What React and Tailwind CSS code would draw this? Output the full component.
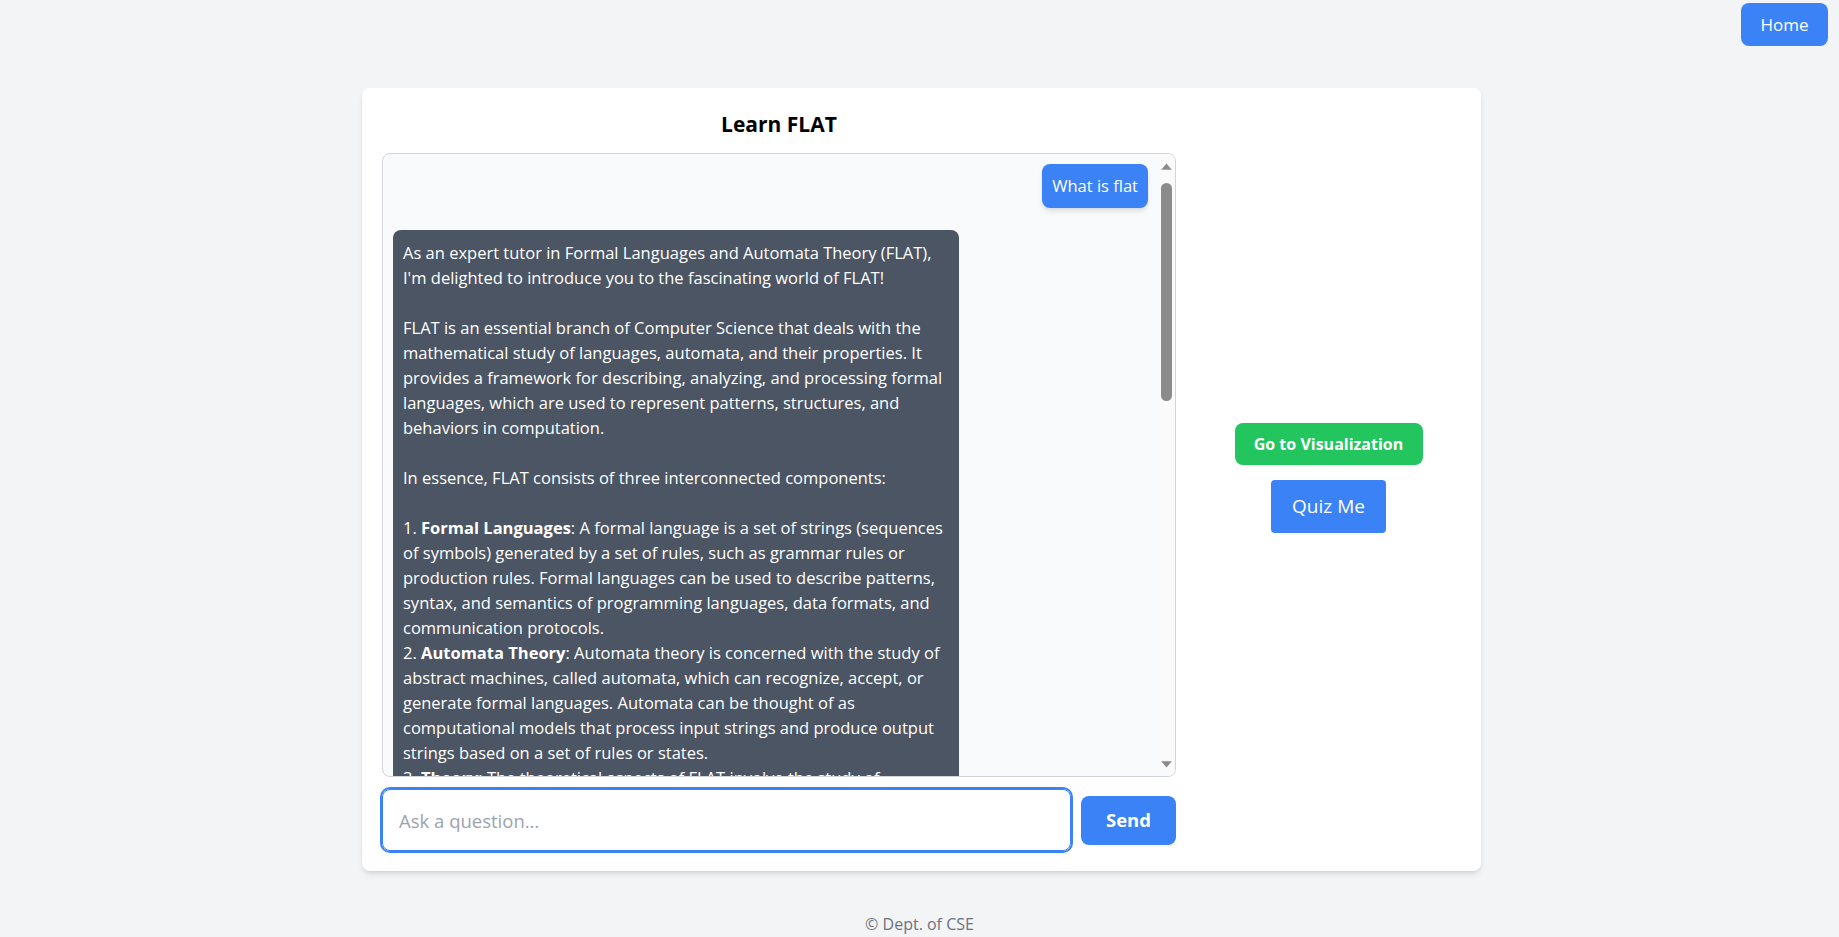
import { useState } from "react";

const answer = [
  "As an expert tutor in Formal Languages and Automata Theory (FLAT), I'm delighted to introduce you to the fascinating world of FLAT!\n\nFLAT is an essential branch of Computer Science that deals with the mathematical study of languages, automata, and their properties. It provides a framework for describing, analyzing, and processing formal languages, which are used to represent patterns, structures, and behaviors in computation.\n\nIn essence, FLAT consists of three interconnected components:\n\n1. ",
  { b: "Formal Languages" },
  ": A formal language is a set of strings (sequences of symbols) generated by a set of rules, such as grammar rules or production rules. Formal languages can be used to describe patterns, syntax, and semantics of programming languages, data formats, and communication protocols.\n2. ",
  { b: "Automata Theory" },
  ": Automata theory is concerned with the study of abstract machines, called automata, which can recognize, accept, or generate formal languages. Automata can be thought of as computational models that process input strings and produce output strings based on a set of rules or states.\n3. ",
  { b: "Theory" },
  ": The theoretical aspects of FLAT involve the study of computability, decidability, and complexity of formal languages and automata. Theory helps us understand what problems can be solved by machines and how efficiently they can be solved.\n\nSome of the key topics you'll encounter in FLAT include:\n\n* ",
  { b: "Regular languages and finite automata" },
  ": the simplest class of languages, recognized by deterministic and nondeterministic finite automata and described by regular expressions.\n* ",
  { b: "Context-free languages and pushdown automata" },
  ": languages generated by context-free grammars, which are the foundation of parsing in compilers.\n* ",
  { b: "Turing machines" },
  ": the most powerful model of computation, used to define what it means for a problem to be computable.\n* ",
  { b: "Decidability and undecidability" },
  ": the study of problems that can or cannot be solved by any algorithm, such as the halting problem.\n* ",
  { b: "Computational complexity" },
  ": the classification of problems by the resources (time and space) needed to solve them, including the famous P vs NP question.\n\nFLAT has numerous applications in computer science, including compiler design, natural language processing, text searching and pattern matching, network protocol verification, artificial intelligence, and software testing. Understanding FLAT will give you a deeper insight into the fundamental capabilities and limitations of computers.\n\nAs your tutor, I'll guide you through each of these topics step by step, with clear explanations, examples, and practice problems. Feel free to ask me questions about any concept, such as how to construct a DFA for a given language, how to convert an NFA to a DFA, or how to prove that a language is not regular using the pumping lemma.\n\nWhat would you like to explore first? We can start with the basics of alphabets, strings, and languages, or dive straight into finite automata!",
];

function Arrow({ down }) {
  return (
    <svg width="11" height="7" viewBox="0 0 11 7" className={down ? "rotate-180" : ""}>
      <polygon points="5.5,0.4 10.8,6.8 0.2,6.8" fill="#8b8b8b" />
    </svg>
  );
}

export default function App() {
  const [question, setQuestion] = useState("");
  const messages = [
    { role: "user", text: ["What is flat"] },
    { role: "bot", text: answer },
  ];

  return (
    <div className="min-h-screen bg-[#f3f4f6] font-['Open_Sans',sans-serif]">
      <div className="flex justify-end pt-[3px] pr-[11px]">
        <button className="w-[87px] h-[43px] bg-[#3b82f6] text-white text-[17px] rounded-lg">
          Home
        </button>
      </div>

      <div className="ml-[362px] mt-[42px] w-[1119px] bg-white rounded-lg shadow-md p-5 flex gap-5">
        {/* Chat column */}
        <div className="w-[794px] flex flex-col">
          <h1 className="text-center text-[21px] leading-8 font-bold text-black mb-[13px]">
            Learn FLAT
          </h1>
          <div className="h-[624px] flex border border-[#d1d5db] rounded-lg bg-[#f9fafb] overflow-hidden">
            <div className="flex-1 overflow-y-auto [scrollbar-width:none] p-2.5 flex flex-col gap-[22px]">
              {messages.map((msg, i) => (
                <div
                  key={i}
                  className={
                    msg.role === "user"
                      ? "self-end max-w-[75%] bg-[#3b82f6] text-white rounded-lg shadow-md p-2.5 text-[16.5px] leading-6"
                      : "self-start max-w-[75%] bg-[#4b5563] text-white rounded-lg p-2.5 text-[16.5px] leading-[25px] whitespace-pre-wrap"
                  }
                >
                  {msg.text.map((part, j) =>
                    typeof part === "string" ? (
                      <span key={j}>{part}</span>
                    ) : (
                      <strong key={j}>{part.b}</strong>
                    )
                  )}
                </div>
              ))}
            </div>
            {/* scrollbar */}
            <div className="w-[17px] shrink-0 bg-[#fafafa] flex flex-col items-center">
              <div className="h-[24px] flex items-center justify-center">
                <Arrow />
              </div>
              <div className="mt-[5px] w-[11px] h-[218px] rounded-full bg-[#8b8b8b]" />
              <div className="flex-1" />
              <div className="h-[24px] flex items-center justify-center">
                <Arrow down />
              </div>
            </div>
          </div>
          <div className="mt-3 flex items-center gap-2.5">
            <input
              type="text"
              value={question}
              onChange={(e) => setQuestion(e.target.value)}
              placeholder="Ask a question..."
              className="flex-1 h-[62px] px-4 text-[18.5px] border border-[#3b82f6] ring-2 ring-[#3b82f6] rounded-lg outline-none placeholder:text-[#9ca3af]"
            />
            <button className="w-[95px] h-[49px] bg-[#3b82f6] text-white text-[18.5px] font-bold rounded-lg">
              Send
            </button>
          </div>
        </div>

        {/* Side actions */}
        <div className="flex-1 flex flex-col items-center justify-center gap-[15px] -mt-[4px]">
          <button className="w-[188px] h-[42px] bg-[#22c55e] text-white text-[16px] font-bold rounded-lg">
            Go to Visualization
          </button>
          <button className="w-[115px] h-[53px] bg-[#3b82f6] text-white text-[19px] rounded">
            Quiz Me
          </button>
        </div>
      </div>

      <footer className="mt-[41px] text-center text-[#6b7280] leading-6">
        © Dept. of CSE
      </footer>
    </div>
  );
}
